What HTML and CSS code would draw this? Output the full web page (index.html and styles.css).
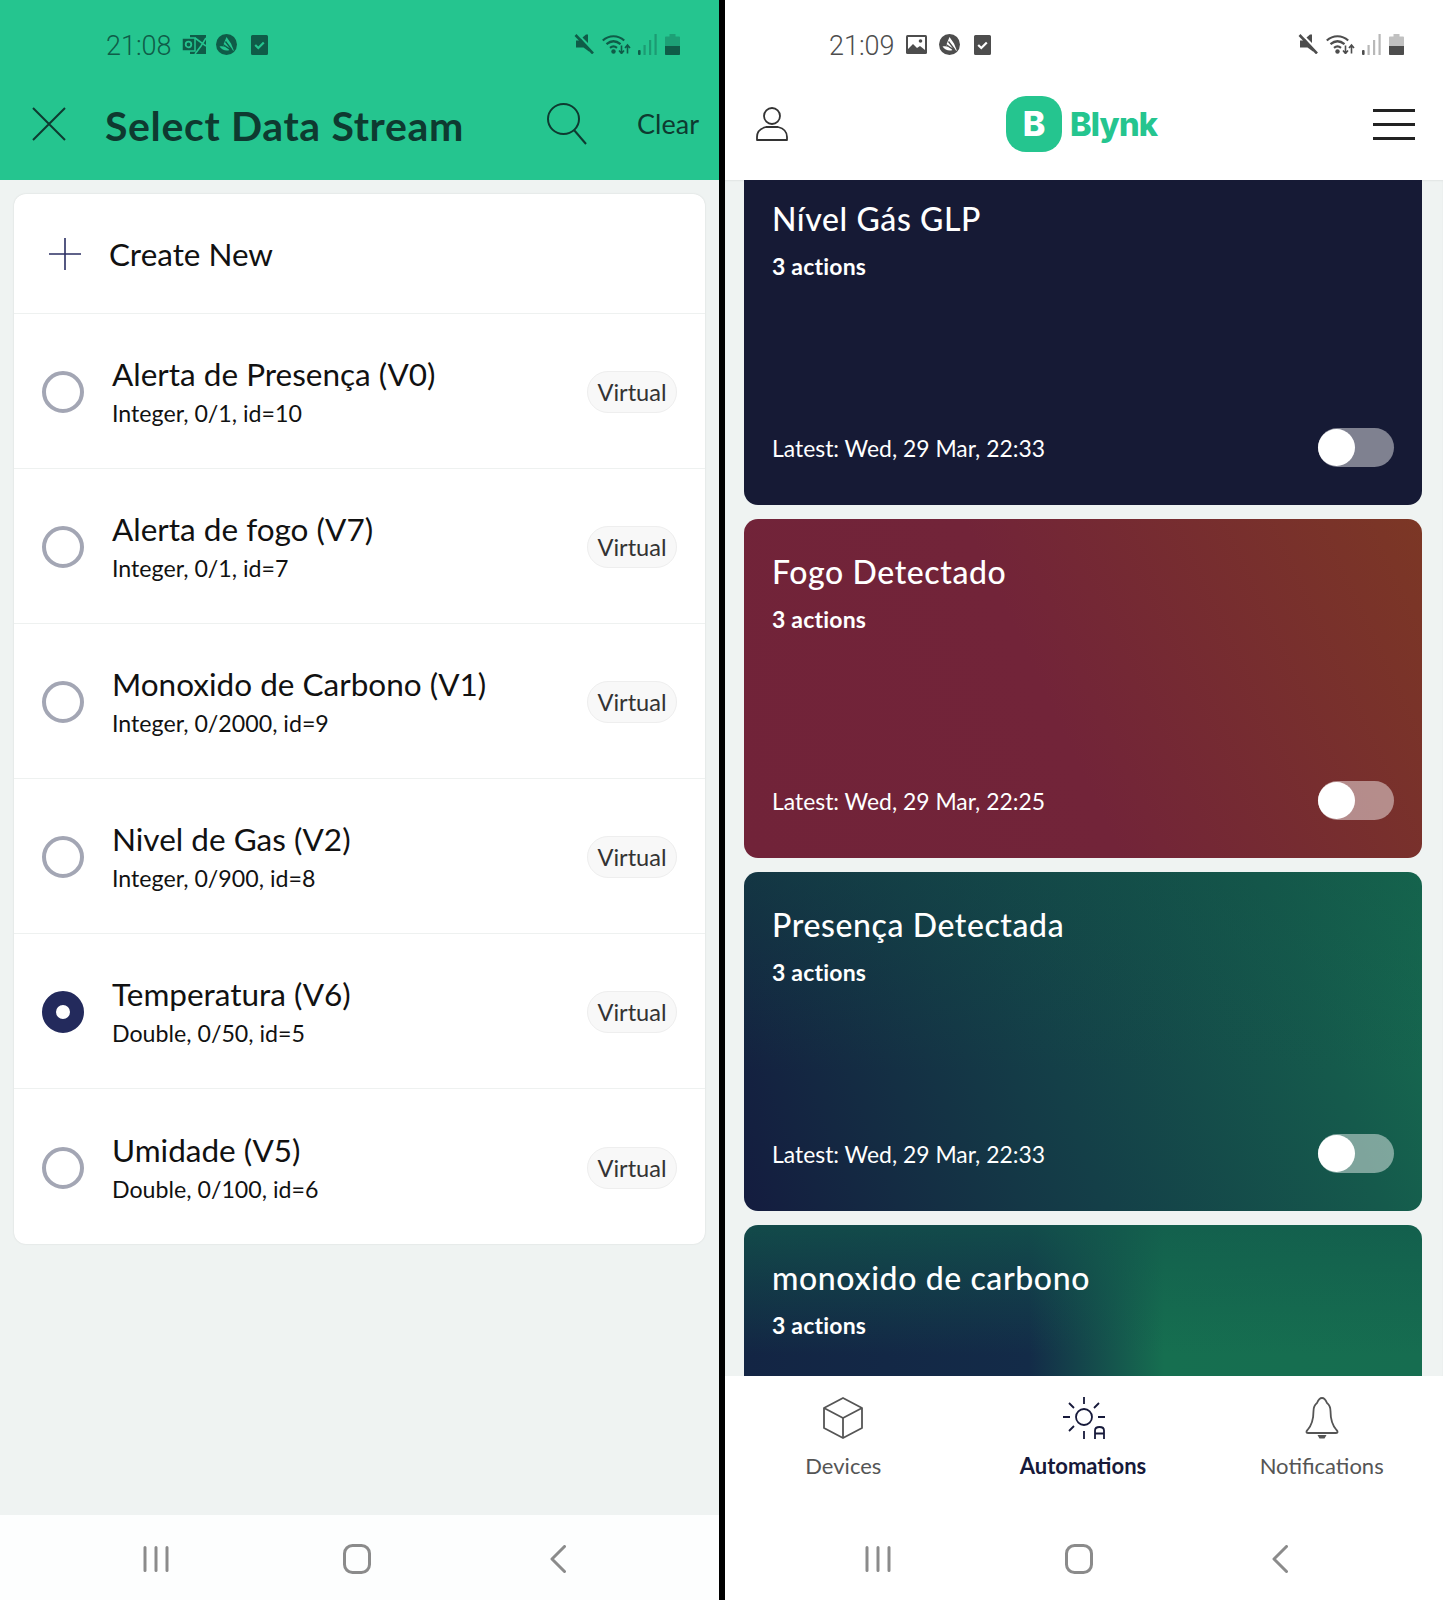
FILE: index.html
```html
<!doctype html>
<html lang="en">
    <head>
        <meta charset="UTF-8" />
        <title>Blynk - Data Streams and Automations</title>
        <link rel="stylesheet" href="styles.css">
    </head>
    <body>
        <svg class="sprites" width="0" height="0">
            <symbol id="i-mute" viewBox="0 0 20 20">
                <path d="M2 6.500h3.500L7 5l8 9v3.500L9.500 13.500H2zM8.500 3.500 12 .5h2v8.500z" fill="currentColor"/>
                <path d="M1.500 1 19 19.500" stroke="currentColor" stroke-width="2.600"/>
            </symbol>
            <symbol id="i-wifi" viewBox="0 0 29 20">
                <g fill="none" stroke="currentColor" stroke-width="2.200">
                    <path d="M.8 6.500C7 .8 16 .8 22.200 6.500"/>
                    <path d="M4.500 10.200c4.500-3.800 9.500-3.800 14 0"/>
                    <path d="M8 13.800c2.500-2 4.500-2 7 0"/>
                </g>
                <circle cx="11.500" cy="17.500" r="2.200" fill="currentColor"/>
                <path d="M19.500 11.500v8M17 16.500l2.500 3 2.500-3M25.500 19.500v-8M23 14l2.500-3 2.500 3" fill="none" stroke="currentColor" stroke-width="1.600"/>
            </symbol>
            <symbol id="i-signal" viewBox="0 0 19 21">
                <rect x="0" y="16" width="2.600" height="5" rx="1" fill="currentColor"/>
                <rect x="5.500" y="11" width="2.200" height="10" fill="currentColor" opacity=".4"/>
                <rect x="11" y="6" width="2.200" height="15" fill="currentColor" opacity=".4"/>
                <rect x="16.500" y="0" width="2.200" height="21" fill="currentColor" opacity=".4"/>
            </symbol>
            <symbol id="i-battery" viewBox="0 0 15 21">
                <path d="M4.500 0h6v2.500H14a1 1 0 0 1 1 1V20a1 1 0 0 1-1 1H1a1 1 0 0 1-1-1V3.500a1 1 0 0 1 1-1h3.500z" fill="currentColor" opacity=".35"/>
                <path d="M0 12h15v8a1 1 0 0 1-1 1H1a1 1 0 0 1-1-1z" fill="currentColor"/>
            </symbol>
            <symbol id="i-swoosh" viewBox="0 0 21 21">
                <circle cx="10.500" cy="10.500" r="10.500" fill="currentColor"/>
                <path d="M10.500 3 15 9.500l3 7.500-4-2.500-7-3z" fill="var(--knock)"/>
                <path d="M3.500 12.500c4-.8 7.500.5 10 3.500-3.500 1.500-7.500 0-10-3.500z" fill="var(--knock)"/>
                <path d="M9.500 7.500 16 16M7 10.500l8 5.500" stroke="currentColor" stroke-width="1.300"/>
            </symbol>
            <symbol id="i-check" viewBox="0 0 17 21">
                <path d="M1.500 1h14A1.500 1.500 0 0 1 17 2.500v17a1.500 1.500 0 0 1-1.500 1.500h-14A1.500 1.500 0 0 1 0 19.500v-17A1.500 1.500 0 0 1 1.500 1z" fill="currentColor"/>
                <path d="M4.200 11 7.300 14 12.800 8.500" fill="none" stroke="var(--knock)" stroke-width="2.200"/>
            </symbol>
            <symbol id="i-recents" viewBox="0 0 26 26">
                <path d="M2 1.500v23M13 1.500v23M24 1.500v23" stroke="currentColor" stroke-width="3" stroke-linecap="round"/>
            </symbol>
            <symbol id="i-home" viewBox="0 0 28 30">
                <rect x="1.500" y="1.500" width="25" height="27" rx="8" fill="none" stroke="currentColor" stroke-width="3"/>
            </symbol>
            <symbol id="i-back" viewBox="0 0 16 28">
                <path d="M14.500 1.500 2 14l12.500 12.500" fill="none" stroke="currentColor" stroke-width="3" stroke-linecap="round" stroke-linejoin="round"/>
            </symbol>
        </svg>

        <div class="screens">
            <section class="phone" id="streamScreen">
                <header class="green-head">
                    <div class="status-bar status-dark">
                        <span class="clock">21:08</span>
                        <svg class="st-icon st-outlook" viewBox="0 0 24 19">
                            <path d="M8 0h16v19H8z" fill="currentColor"/>
                            <path d="M13 3l11 8M13 19l6-8 5-8" fill="none" stroke="#25c58f" stroke-width="1.600"/>
                            <rect x="0" y="3" width="13" height="13" fill="currentColor" stroke="#25c58f" stroke-width="1.500"/>
                            <circle cx="6.500" cy="9.500" r="2.800" fill="none" stroke="#25c58f" stroke-width="1.800"/>
                        </svg>
                        <svg class="st-icon st-round"><use href="#i-swoosh"/></svg>
                        <svg class="st-icon st-check"><use href="#i-check"/></svg>
                        <div class="status-right">
                            <svg class="st-icon st-mute"><use href="#i-mute"/></svg>
                            <svg class="st-icon st-wifi"><use href="#i-wifi"/></svg>
                            <svg class="st-icon st-signal"><use href="#i-signal"/></svg>
                            <svg class="st-icon st-battery"><use href="#i-battery"/></svg>
                        </div>
                    </div>
                    <div class="toolbar">
                        <svg class="close-icon" viewBox="0 0 34 34">
                            <path d="M1 1 33 33M33 1 1 33" stroke="currentColor" stroke-width="2"/>
                        </svg>
                        <h1>Select Data Stream</h1>
                        <svg class="search-icon" viewBox="0 0 40 42">
                            <ellipse cx="16.500" cy="16" rx="15.500" ry="15" fill="none" stroke="currentColor" stroke-width="2"/>
                            <path d="M27 27 39 41" stroke="currentColor" stroke-width="2"/>
                        </svg>
                        <span class="clear-btn">Clear</span>
                    </div>
                </header>

                <main class="stream-main">
                    <div class="stream-card">
                        <div class="create-row">
                            <svg class="plus-icon" viewBox="0 0 32 32">
                                <path d="M16 0v32M0 16h32" stroke="#2b2f63" stroke-width="1.600"/>
                            </svg>
                            <span>Create New</span>
                        </div>
                        <div class="stream-row">
                            <span class="radio"></span>
                            <div class="stream-text">
                                <div class="stream-name">Alerta de Presença (V0)</div>
                                <div class="stream-meta">Integer, 0/1, id=10</div>
                            </div>
                            <span class="badge">Virtual</span>
                        </div>
                        <div class="stream-row">
                            <span class="radio"></span>
                            <div class="stream-text">
                                <div class="stream-name">Alerta de fogo (V7)</div>
                                <div class="stream-meta">Integer, 0/1, id=7</div>
                            </div>
                            <span class="badge">Virtual</span>
                        </div>
                        <div class="stream-row">
                            <span class="radio"></span>
                            <div class="stream-text">
                                <div class="stream-name">Monoxido de Carbono (V1)</div>
                                <div class="stream-meta">Integer, 0/2000, id=9</div>
                            </div>
                            <span class="badge">Virtual</span>
                        </div>
                        <div class="stream-row">
                            <span class="radio"></span>
                            <div class="stream-text">
                                <div class="stream-name">Nivel de Gas (V2)</div>
                                <div class="stream-meta">Integer, 0/900, id=8</div>
                            </div>
                            <span class="badge">Virtual</span>
                        </div>
                        <div class="stream-row">
                            <span class="radio radio-on"></span>
                            <div class="stream-text">
                                <div class="stream-name">Temperatura (V6)</div>
                                <div class="stream-meta">Double, 0/50, id=5</div>
                            </div>
                            <span class="badge">Virtual</span>
                        </div>
                        <div class="stream-row">
                            <span class="radio"></span>
                            <div class="stream-text">
                                <div class="stream-name">Umidade (V5)</div>
                                <div class="stream-meta">Double, 0/100, id=6</div>
                            </div>
                            <span class="badge">Virtual</span>
                        </div>
                    </div>
                </main>

                <nav class="sys-nav nav-left">
                    <svg class="nav-recents"><use href="#i-recents"/></svg>
                    <svg class="nav-home"><use href="#i-home"/></svg>
                    <svg class="nav-back"><use href="#i-back"/></svg>
                </nav>
            </section>

            <section class="phone" id="automationScreen">
                <header class="white-head">
                    <div class="status-bar status-grey">
                        <span class="clock">21:09</span>
                        <svg class="st-icon st-image" viewBox="0 0 21 19">
                            <rect width="21" height="19" rx="1.500" fill="currentColor"/>
                            <rect x="2" y="2" width="17" height="15" fill="#fff"/>
                            <path d="M2 17v-3l5-5 4 4 3-2 5 4v2z" fill="currentColor"/>
                            <circle cx="14.500" cy="6" r="1.800" fill="currentColor"/>
                        </svg>
                        <svg class="st-icon st-round"><use href="#i-swoosh"/></svg>
                        <svg class="st-icon st-check"><use href="#i-check"/></svg>
                        <div class="status-right">
                            <svg class="st-icon st-mute"><use href="#i-mute"/></svg>
                            <svg class="st-icon st-wifi"><use href="#i-wifi"/></svg>
                            <svg class="st-icon st-signal"><use href="#i-signal"/></svg>
                            <svg class="st-icon st-battery"><use href="#i-battery"/></svg>
                        </div>
                    </div>
                    <div class="app-bar">
                        <svg class="user-icon" viewBox="0 0 32 34">
                            <ellipse cx="16" cy="9" rx="8" ry="8" fill="none" stroke="currentColor" stroke-width="1.800"/>
                            <path d="M1 33v-3c0-6 5-9 9-10h12c4 1 9 4 9 10v3z" fill="none" stroke="currentColor" stroke-width="1.800" stroke-linejoin="round"/>
                        </svg>
                        <div class="logo">
                            <span class="logo-mark">B</span>
                            <span class="logo-word">Blynk</span>
                        </div>
                        <div class="menu-icon"><span></span><span></span><span></span></div>
                    </div>
                </header>

                <main class="auto-main">
                    <div class="auto-list">
                        <article class="auto-card card-navy">
                            <h2>Nível Gás GLP</h2>
                            <p class="actions">3 actions</p>
                            <div class="auto-foot">
                                <span>Latest: Wed, 29 Mar, 22:33</span>
                                <span class="toggle"></span>
                            </div>
                        </article>
                        <article class="auto-card card-red">
                            <h2>Fogo Detectado</h2>
                            <p class="actions">3 actions</p>
                            <div class="auto-foot">
                                <span>Latest: Wed, 29 Mar, 22:25</span>
                                <span class="toggle"></span>
                            </div>
                        </article>
                        <article class="auto-card card-green">
                            <h2>Presença Detectada</h2>
                            <p class="actions">3 actions</p>
                            <div class="auto-foot">
                                <span>Latest: Wed, 29 Mar, 22:33</span>
                                <span class="toggle"></span>
                            </div>
                        </article>
                        <article class="auto-card card-teal">
                            <h2>monoxido de carbono</h2>
                            <p class="actions">3 actions</p>
                        </article>
                    </div>
                </main>

                <div class="tab-bar">
                    <div class="tab">
                        <svg class="tab-icon" viewBox="0 0 42 42">
                            <g fill="none" stroke="currentColor" stroke-width="1.800" stroke-linejoin="round">
                                <path d="M21 1 40 11v20L21 41 2 31V11z"/>
                                <path d="M2 11l19 10 19-10M21 21v20"/>
                            </g>
                        </svg>
                        <span>Devices</span>
                    </div>
                    <div class="tab tab-active">
                        <svg class="tab-icon" viewBox="0 0 44 42">
                            <circle cx="21" cy="20" r="8" fill="none" stroke="currentColor" stroke-width="1.800"/>
                            <path d="M21 0v7M6 6l5 5M36 6l-5 5M0 20h7M35 20h7M11 29l-5 5M21 34v8" fill="none" stroke="currentColor" stroke-width="1.800"/>
                            <path d="M32 42V33.500q0-3.500 4.500-3.500t4.500 3.500V42M32 36.500h9" fill="none" stroke="currentColor" stroke-width="1.800"/>
                        </svg>
                        <span>Automations</span>
                    </div>
                    <div class="tab">
                        <svg class="tab-icon" viewBox="0 0 38 42">
                            <path d="M19 1c-3 0-4 2.500-5 5-2 1.500-3.500 4-3.500 8 0 8-1.500 14-6 19-1.500 1.500-1.500 3 .5 3h28c2 0 2-1.500.5-3-4.500-5-6-11-6-19 0-4-1.500-6.500-3.500-8-1-2.500-2-5-5-5z" fill="none" stroke="currentColor" stroke-width="1.800"/>
                            <path d="M14.500 38h9l-2 3.500h-5z" fill="currentColor"/>
                        </svg>
                        <span>Notifications</span>
                    </div>
                </div>

                <nav class="sys-nav nav-right">
                    <svg class="nav-recents"><use href="#i-recents"/></svg>
                    <svg class="nav-home"><use href="#i-home"/></svg>
                    <svg class="nav-back"><use href="#i-back"/></svg>
                </nav>
            </section>
        </div>
    </body>
</html>
```
FILE: styles.css
```css
body {
    margin: 0;
    background: #000;
    font-family: "Lato", "Noto Sans", sans-serif;
    color: #111;
}
.sprites {
    display: block;
    height: 0;
}
.screens {
    display: flex;
    gap: 6px;
    height: 1600px;
    overflow: hidden;
}
.phone {
    display: flex;
    flex-direction: column;
    background: #eff3f2;
    overflow: hidden;
}
#streamScreen {
    width: 719px;
}
#automationScreen {
    width: 718px;
}

/* status bars */
.green-head {
    background: #25c58f;
    height: 180px;
    flex: none;
}
.white-head {
    background: #fff;
    height: 180px;
    flex: none;
    position: relative;
    z-index: 1;
}
.status-bar {
    display: flex;
    align-items: center;
    height: 88px;
    padding-right: 39px;
}
.status-dark {
    --knock: #25c58f;
    color: #0f5c48;
    padding-left: 106px;
}
.status-grey {
    --knock: #fff;
    color: #4d4d4d;
    padding-left: 104px;
}
.clock {
    font-family: "Roboto", sans-serif;
    font-weight: 300;
    font-size: 27px;
    width: 76px;
    margin-top: 3px;
}
.status-grey .clock {
    width: 77px;
}
.st-icon {
    flex: none;
}
.st-outlook {
    width: 24px;
    height: 19px;
    margin-right: 10px;
}
.st-image {
    width: 21px;
    height: 19px;
    margin-right: 12px;
}
.st-round {
    width: 21px;
    height: 21px;
    margin-right: 14px;
}
.st-check {
    width: 17px;
    height: 21px;
}
.status-right {
    display: flex;
    align-items: center;
    gap: 8px;
    margin-left: auto;
}
.st-mute {
    width: 20px;
    height: 20px;
}
.st-wifi {
    width: 29px;
    height: 20px;
}
.st-signal {
    width: 19px;
    height: 21px;
    margin-left: -1px;
}
.st-battery {
    width: 15px;
    height: 21px;
}

/* green toolbar */
.toolbar {
    display: flex;
    align-items: center;
    height: 72px;
    padding: 0 20px 0 32px;
    color: #0e3a30;
}
.close-icon {
    width: 34px;
    height: 34px;
    flex: none;
}
.toolbar h1 {
    margin: 3px 0 0 39px;
    font-size: 41px;
    font-weight: 700;
    letter-spacing: 0.65px;
    white-space: nowrap;
}
.search-icon {
    width: 40px;
    height: 42px;
    margin-left: auto;
    flex: none;
}
.clear-btn {
    margin: -1px 0 0 50px;
    font-size: 27px;
}

/* stream list */
.stream-main {
    flex: 1;
    padding: 14px 14px 0;
}
.stream-card {
    background: #fff;
    border-radius: 12px;
    box-shadow: 0 0 2px rgba(0, 0, 0, 0.12);
}
.create-row {
    display: flex;
    align-items: center;
    gap: 28px;
    height: 120px;
    padding-left: 35px;
    border-bottom: 1px solid #eef1f0;
    box-sizing: border-box;
    font-size: 31.4px;
}
.plus-icon {
    width: 32px;
    height: 32px;
}
.stream-row {
    display: flex;
    align-items: center;
    height: 155px;
    padding: 2px 28px 0;
    border-bottom: 1px solid #eef1f0;
    box-sizing: border-box;
}
.stream-row:last-child {
    border-bottom: none;
}
.radio {
    width: 42px;
    height: 42px;
    border: 4px solid #a3a6b4;
    border-radius: 50%;
    box-sizing: border-box;
    flex: none;
    background: #fff;
}
.radio-on {
    border: 14px solid #232a5c;
}
.stream-text {
    flex: 1;
    padding: 2px 0 0 28px;
}
.stream-name {
    font-size: 31.5px;
    line-height: 40px;
}
.stream-meta {
    font-size: 23.2px;
    line-height: 38px;
}
.badge {
    width: 90px;
    height: 42px;
    line-height: 40px;
    text-align: center;
    font-size: 23.6px;
    color: #333;
    background: #f8f8f8;
    border: 1px solid #eee;
    border-radius: 21px;
    box-sizing: border-box;
}

/* app header */
.app-bar {
    display: flex;
    align-items: center;
    height: 72px;
    padding: 0 28px 0 31px;
    color: #333;
}
.user-icon {
    width: 32px;
    height: 34px;
    flex: none;
}
.logo {
    display: flex;
    align-items: center;
    gap: 8px;
    margin-left: 218px;
}
.logo-mark {
    width: 56px;
    height: 56px;
    line-height: 56px;
    text-align: center;
    background: #25c58f;
    border-radius: 20px;
    color: #fff;
    font-family: "Inter", sans-serif;
    font-size: 34px;
    font-weight: 800;
}
.logo-word {
    color: #25c58f;
    font-family: "Inter", sans-serif;
    font-size: 32.5px;
    font-weight: 800;
    letter-spacing: -0.8px;
}
.menu-icon {
    display: flex;
    flex-direction: column;
    gap: 11px;
    width: 42px;
    margin-left: auto;
}
.menu-icon span {
    height: 3px;
    background: #222;
}

/* automation cards */
.auto-main {
    flex: 1;
    min-height: 0;
    overflow: hidden;
    box-shadow: inset 0 1px 2px rgba(0, 0, 0, 0.06);
}
.auto-list {
    display: flex;
    flex-direction: column;
    gap: 14px;
    margin-top: -14px;
    padding: 0 21px 0 19px;
}
.auto-card {
    display: flex;
    flex-direction: column;
    flex: none;
    height: 339px;
    padding: 33px 28px 38px;
    box-sizing: border-box;
    border-radius: 14px;
    color: #fff;
}
.auto-card h2 {
    margin: 0;
    font-size: 32px;
    line-height: 40px;
    font-weight: 500;
    letter-spacing: 0.6px;
}
.actions {
    margin: 13px 0 0;
    font-size: 23px;
    line-height: 28px;
    font-weight: 700;
    letter-spacing: 0.2px;
}
.auto-foot {
    display: flex;
    align-items: center;
    justify-content: space-between;
    margin-top: auto;
    font-size: 22.9px;
}
.toggle {
    position: relative;
    width: 76px;
    height: 39px;
    border-radius: 20px;
    background: rgba(255, 255, 255, 0.45);
}
.toggle::before {
    content: "";
    position: absolute;
    left: 0;
    top: 1px;
    width: 37px;
    height: 37px;
    border-radius: 50%;
    background: #fff;
}
.card-navy {
    background: #161a35;
}
.card-red {
    background: linear-gradient(65deg, #712339 0%, #722439 45%, #7c3725 100%);
}
.card-green {
    background:
        linear-gradient(180deg, rgba(18, 80, 70, 0.35) 0, rgba(18, 80, 70, 0) 200px),
        linear-gradient(70deg, #141c3f 0%, #143f48 45%, #155a4c 80%, #166d50 100%);
}
.card-teal {
    background:
        linear-gradient(180deg, rgba(18, 90, 76, 0.7) 0, rgba(18, 90, 76, 0) 130px),
        linear-gradient(90deg, #132544 0, #132b48 42%, #166f50 62%, #166d50 100%);
}

/* bottom tabs */
.tab-bar {
    display: grid;
    grid-template-columns: repeat(3, 1fr);
    height: 139px;
    flex: none;
    background: #fff;
    padding-right: 2px;
}
.tab {
    display: flex;
    flex-direction: column;
    align-items: center;
    padding-top: 21px;
    color: #555;
    font-size: 22px;
}
.tab:first-child {
    margin-left: -2px;
}
.tab span {
    margin-top: 13px;
}
.tab-active {
    color: #16193a;
    font-weight: 700;
}
.tab-active .tab-icon {
    margin-left: 4px;
}
.tab-icon {
    width: 44px;
    height: 42px;
}

/* android nav */
.sys-nav {
    display: grid;
    grid-template-columns: repeat(3, 201px);
    justify-items: center;
    align-items: center;
    height: 85px;
    flex: none;
    padding-top: 2px;
    box-sizing: border-box;
    background: #fdfefe;
    color: #8b8b8b;
}
.nav-left {
    padding-left: 55px;
}
.nav-right {
    padding-left: 52px;
    background: #fff;
}
.nav-recents {
    width: 26px;
    height: 26px;
}
.nav-home {
    width: 28px;
    height: 30px;
}
.nav-back {
    width: 16px;
    height: 28px;
}
```
